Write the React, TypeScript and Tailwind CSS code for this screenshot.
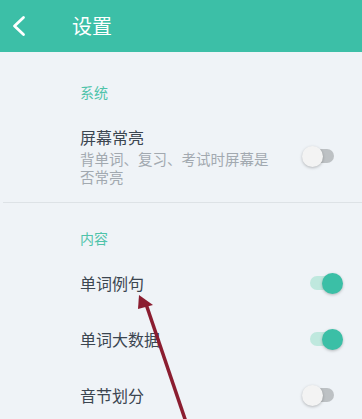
import React from "react";

type ToggleProps = { on?: boolean };

const Toggle = ({ on = false }: ToggleProps) => {
  return (
    <div className="relative w-[42px] h-[20px] mr-[18px]">
      <div
        className={
          on
            ? "absolute left-[8px] top-[3px] w-[30px] h-[14px] rounded-full bg-[#bfe8de]"
            : "absolute left-[6px] top-[3px] w-[26px] h-[14px] rounded-full bg-[#bdc1c4]"
        }
      />
      <div
        className={
          on
            ? "absolute left-[20px] top-0 w-[21px] h-[21px] rounded-full bg-[#3bbfa6] shadow-[0_1px_3px_rgba(0,0,0,0.25)]"
            : "absolute left-0 top-0 w-[21px] h-[21px] rounded-full bg-[#f3f3f3] shadow-[0_1px_3px_rgba(0,0,0,0.25)]"
        }
      />
    </div>
  );
};

const Row = ({ label, on }: { label: string; on?: boolean }) => (
  <div className="flex flex-row items-center justify-between h-[56px] pl-[80px]">
    <div className="text-[16px] leading-[22px] text-[#3b4550]">{label}</div>
    <Toggle on={on} />
  </div>
);

export default function App() {
  return (
    <div
      className="relative w-[362px] h-[419px] overflow-hidden bg-[#eff3f7]"
      style={{ fontFamily: '"Noto Sans CJK SC", "Noto Sans", sans-serif' }}
    >
      <div className="flex flex-row items-center h-[52px] bg-[#3cbfa7]">
        <svg width="16" height="22" viewBox="0 0 16 22" className="ml-[11px]">
          <path
            d="M12.5 2.5 L3.5 11 L12.5 19.5"
            fill="none"
            stroke="white"
            strokeWidth="2.8"
            strokeLinecap="round"
            strokeLinejoin="round"
          />
        </svg>
        <div className="ml-[45px] text-[20px] leading-[26px] text-white">设置</div>
      </div>

      <div className="pl-[80px] pt-[30px] text-[14px] leading-[20px] text-[#4fc3aa]">系统</div>

      <div className="flex flex-row items-center justify-between mt-[24px] pl-[80px] pb-[16px]">
        <div className="flex flex-col">
          <div className="text-[16px] leading-[22px] text-[#3b4550]">屏幕常亮</div>
          <div className="mt-[2px] w-[192px] text-[14.5px] leading-[18px] text-[#a2a9b0]">
            背单词、复习、考试时屏幕是否常亮
          </div>
        </div>
        <Toggle />
      </div>

      <div className="ml-[3px] h-px bg-[#dde2e6]" />

      <div className="pl-[80px] mt-[25px] text-[14px] leading-[20px] text-[#4fc3aa]">内容</div>

      <div className="mt-[7px] flex flex-col">
        <Row label="单词例句" on />
        <Row label="单词大数据" on />
        <Row label="音节划分" />
      </div>

      <svg
        className="absolute left-0 top-0 pointer-events-none"
        width="362"
        height="419"
        viewBox="0 0 362 419"
      >
        <line x1="146" y1="304" x2="186" y2="422" stroke="#8b1d30" strokeWidth="3.5" />
        <polygon points="139,295 138,309 153,305" fill="#8b1d30" />
      </svg>
    </div>
  );
}
